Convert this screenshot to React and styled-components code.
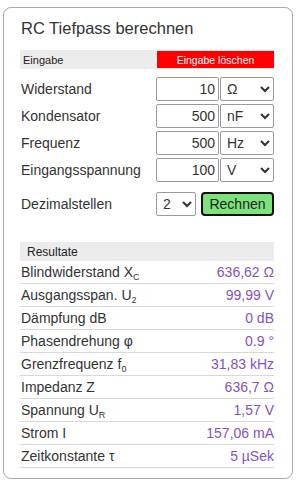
import React from "react";
import styled, { createGlobalStyle } from "styled-components";

const Global = createGlobalStyle`
  html, body { margin: 0; padding: 0; background: #fff; }
  body { font-family: "Liberation Sans", Arial, sans-serif; color: #333; }
`;

const Card = styled.div`
  box-sizing: border-box;
  margin: 7px 0 0 3px;
  width: 290px;
  border: 1px solid #a8a8a8;
  border-radius: 8px;
  padding: 10px 18px 10px 16px;
`;

const Title = styled.h1`
  margin: 0 0 12px 1px;
  font-size: 16.5px;
  line-height: 20px;
  font-weight: normal;
  color: #333;
`;

const SectionHeader = styled.div`
  display: flex;
  align-items: center;
  height: 19px;
  background: #ececec;
  margin-top: ${(p) => p.$mt || 0}px;
`;

const HeaderText = styled.span`
  flex: 1;
  padding-left: ${(p) => p.$pl}px;
  font-size: ${(p) => p.$fs}px;
  color: #222;
`;

const ClearButton = styled.button`
  width: 117px;
  height: 17px;
  margin: 0;
  padding: 0;
  border: none;
  background: #ff0000;
  color: #fff;
  font-family: inherit;
  font-size: 10.5px;
  cursor: pointer;
`;

const Inputs = styled.div`
  display: flex;
  flex-direction: column;
  gap: 3px;
  margin-top: 8px;
`;

const InputRow = styled.div`
  display: flex;
  align-items: center;
  height: 24px;
  margin-top: ${(p) => p.$mt || 0}px;
`;

const Label = styled.label`
  width: 136px;
  padding-left: 1px;
  box-sizing: border-box;
  font-size: 14px;
  color: #333;
`;

const NumInput = styled.input`
  box-sizing: border-box;
  width: 63px;
  height: 24px;
  border: 1px solid #9a9a9a;
  border-radius: 2px;
  padding: 0 3px 0 2px;
  text-align: right;
  font-family: inherit;
  font-size: 14px;
  color: #333;
  background: #fff;
  outline: none;
`;

const Select = styled.select`
  box-sizing: border-box;
  width: ${(p) => p.$w}px;
  height: 24px;
  margin-left: ${(p) => p.$ml || 0}px;
  border: 1px solid #9a9a9a;
  border-radius: 2px;
  padding: 0 0 0 2px;
  font-family: inherit;
  font-size: 14px;
  color: #333;
  background: #fff;
`;

const CalcButton = styled.button`
  box-sizing: border-box;
  width: 73px;
  height: 24px;
  margin-left: 5px;
  border: 2px solid #111;
  border-radius: 4px;
  background: #7ce37c;
  color: #222;
  font-family: inherit;
  font-size: 14px;
  padding: 0;
  cursor: pointer;
`;

const ResultRow = styled.div`
  box-sizing: border-box;
  display: flex;
  align-items: center;
  justify-content: space-between;
  height: 23px;
  border-bottom: 1px solid #d8d8d8;
  font-size: 14px;
`;

const RLabel = styled.span`
  padding-left: 1px;
  color: #333;
`;

const RValue = styled.span`
  color: #7f52c8;
`;

const Sub = styled.sub`
  font-size: 9px;
  vertical-align: -3px;
  line-height: 0;
`;

const results = [
  [<>Blindwiderstand X<Sub>C</Sub></>, "636,62 Ω"],
  [<>Ausgangsspan. U<Sub>2</Sub></>, "99,99 V"],
  ["Dämpfung dB", "0 dB"],
  ["Phasendrehung φ", "0.9 °"],
  [<>Grenzfrequenz f<Sub>0</Sub></>, "31,83 kHz"],
  ["Impedanz Z", "636,7 Ω"],
  [<>Spannung U<Sub>R</Sub></>, "1,57 V"],
  ["Strom I", "157,06 mA"],
  ["Zeitkonstante τ", "5 µSek"],
];

const inputs = [
  ["Widerstand", "10", ["Ω", "kΩ", "MΩ"]],
  ["Kondensator", "500", ["nF", "pF", "µF"]],
  ["Frequenz", "500", ["Hz", "kHz", "MHz"]],
  ["Eingangsspannung", "100", ["V", "mV"]],
];

export default function App() {
  return (
    <>
      <Global />
      <Card>
        <Title>RC Tiefpass berechnen</Title>
        <SectionHeader>
          <HeaderText $pl={3} $fs={11}>Eingabe</HeaderText>
          <ClearButton>Eingabe löschen</ClearButton>
        </SectionHeader>
        <Inputs>
          {inputs.map(([l, v, units]) => (
            <InputRow key={l}>
              <Label>{l}</Label>
              <NumInput defaultValue={v} />
              <Select $w={54} $ml={1} defaultValue={units[0]}>
                {units.map((u) => (
                  <option key={u}>{u}</option>
                ))}
              </Select>
            </InputRow>
          ))}
        </Inputs>
        <InputRow $mt={10}>
          <Label>Dezimalstellen</Label>
          <Select $w={40} defaultValue="2">
            {["0", "1", "2", "3", "4"].map((d) => (
              <option key={d}>{d}</option>
            ))}
          </Select>
          <CalcButton>Rechnen</CalcButton>
        </InputRow>
        <SectionHeader $mt={26}>
          <HeaderText $pl={7} $fs={12}>Resultate</HeaderText>
        </SectionHeader>
        {results.map(([l, v], i) => (
          <ResultRow key={i}>
            <RLabel>{l}</RLabel>
            <RValue>{v}</RValue>
          </ResultRow>
        ))}
      </Card>
    </>
  );
}
